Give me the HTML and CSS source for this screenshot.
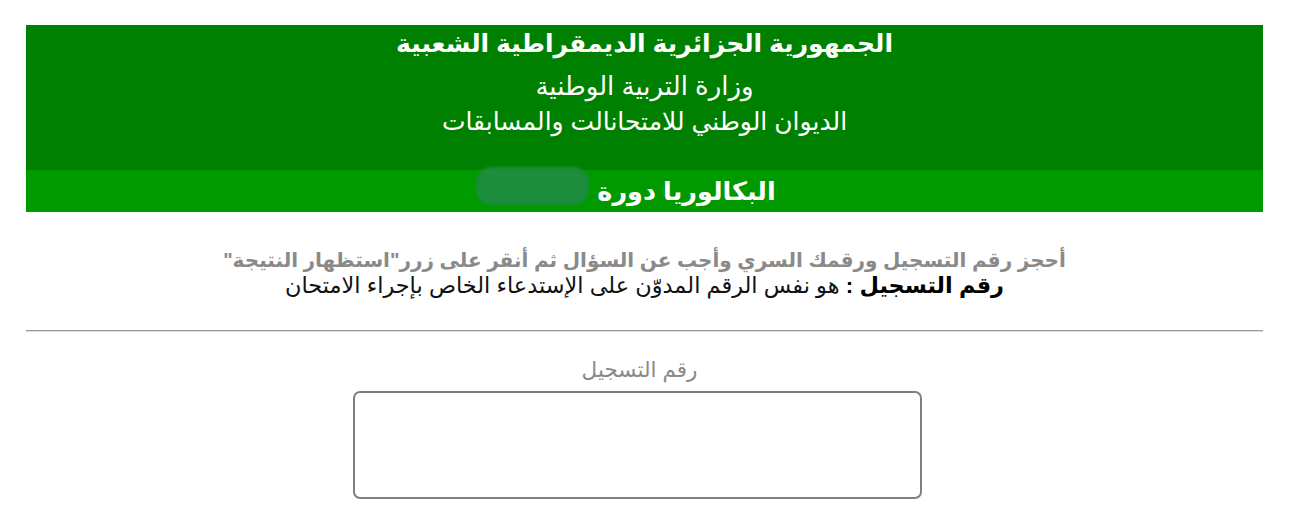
FILE: index.html
```html
<!DOCTYPE html>
<html lang="ar" dir="rtl">
<head>
<meta charset="utf-8">
<title>نتائج البكالوريا</title>
<link rel="stylesheet" href="styles.css">
</head>
<body>
<div class="page">
  <header class="banner">
    <div class="banner-top">
      <div class="line-republic">الجمهورية الجزائرية الديمقراطية الشعبية</div>
      <div class="line-ministry">وزارة التربية الوطنية</div>
      <div class="line-office">الديوان الوطني للامتحانالت والمسابقات</div>
    </div>
    <div class="banner-session">
      <span class="session-text">البكالوريا دورة</span>
      <span class="session-year"></span>
    </div>
  </header>

  <section class="notice">
    <p class="notice-main">أحجز رقم التسجيل ورقمك السري وأجب عن السؤال ثم أنقر على زرر"استظهار النتيجة"</p>
    <p class="notice-sub"><strong>رقم التسجيل :</strong> هو نفس الرقم المدوّن على الإستدعاء الخاص بإجراء الامتحان</p>
  </section>

  <hr class="divider">

  <form class="form">
    <label class="field-label" for="reg">رقم التسجيل</label>
    <input class="field-input" id="reg" type="text">
  </form>
</div>
</body>
</html>
```

FILE: styles.css
```css
html, body {
  margin: 0;
  padding: 0;
  background: #ffffff;
}

body {
  font-family: "Liberation Sans", "DejaVu Sans", Arial, sans-serif;
}

.page {
  padding: 25px 26px 0 26px;
}

.banner {
  background: #008000;
  color: #ffffff;
}

.banner-top {
  height: 145px;
  padding-top: 1px;
  box-sizing: border-box;
  text-align: center;
}

.line-republic {
  font-weight: bold;
  font-size: 25px;
  line-height: 34px;
}

.line-ministry {
  font-size: 26px;
  line-height: 34px;
  margin-top: 9px;
}

.line-office {
  font-size: 25px;
  line-height: 34px;
  margin-top: 1px;
}

.banner-session {
  background: #009900;
  height: 41px;
  border-bottom: 1px solid #2e7d2e;
  display: flex;
  justify-content: center;
  align-items: center;
  gap: 8px;
  padding-right: 37px;
}

.session-text {
  font-weight: bold;
  font-size: 25.5px;
}

.session-year {
  display: inline-block;
  width: 113px;
  height: 38px;
  margin-bottom: 10px;
  border-radius: 16px;
  background: #1b8d3c;
  filter: blur(1.5px);
}

.notice {
  text-align: center;
  padding-top: 34px;
}

.notice p {
  margin: 0;
}

.notice-main {
  font-weight: bold;
  font-size: 20px;
  line-height: 28px;
  color: #8a8a8a;
}

.notice-sub {
  font-size: 22.4px;
  line-height: 24px;
  color: #111111;
}

.notice-sub strong {
  color: #000000;
}

.divider {
  border: 0;
  height: 0;
  border-top: 1px solid #9a9a9a;
  border-bottom: 1px solid #dcdcdc;
  margin: 32px 0 0 0;
}

.form {
  display: flex;
  flex-direction: column;
  align-items: center;
  padding-top: 24px;
}

.field-label {
  font-size: 21.5px;
  line-height: 28px;
  color: #8a8a8a;
  margin-right: 10px;
}

.field-input {
  width: 569px;
  height: 108px;
  box-sizing: border-box;
  margin-top: 7px;
  margin-right: 14px;
  border: 2px solid #7f7f7f;
  border-radius: 7px;
  background: #ffffff;
}
```
